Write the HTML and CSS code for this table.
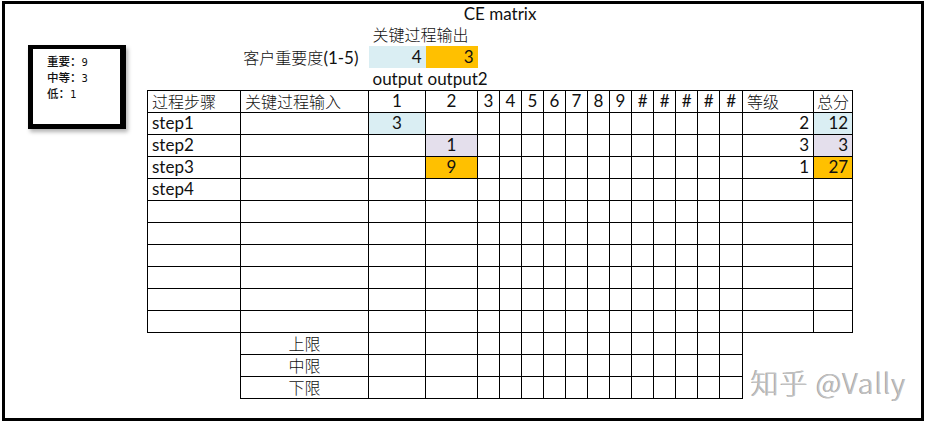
FILE: index.html
```html
<!DOCTYPE html>
<html lang="zh">
<head>
<meta charset="utf-8">
<title>CE matrix</title>
<link rel="stylesheet" href="styles.css">
</head>
<body>
<div class="frame">
  <div class="legend">
    <div class="lg-row"><span class="lg-zh">重要：</span><span class="lg-num">9</span></div>
    <div class="lg-row"><span class="lg-zh">中等：</span><span class="lg-num">3</span></div>
    <div class="lg-row"><span class="lg-zh">低：</span><span class="lg-num">1</span></div>
  </div>
  <table class="sheet">
    <colgroup>
      <col class="w93"><col class="w128"><col class="w57"><col class="w52">
      <col class="w22"><col class="w22"><col class="w22"><col class="w22"><col class="w22"><col class="w22">
      <col class="w22"><col class="w22"><col class="w22"><col class="w22"><col class="w22"><col class="w23">
      <col class="w71"><col class="w39">
    </colgroup>
    <tr class="first">
      <td colspan="2"></td><td colspan="9" class="c">CE matrix</td><td colspan="7"></td>
    </tr>
    <tr class="up">
      <td colspan="2"></td><td colspan="16" class="l"><span class="zh">关键过程输出</span></td>
    </tr>
    <tr>
      <td colspan="2" class="r rp"><span class="zh">客户重要度</span>(1-5)</td>
      <td class="r blue">4</td><td class="r orange">3</td><td colspan="14"></td>
    </tr>
    <tr>
      <td colspan="2"></td><td class="l">output</td><td class="l l2">output2</td><td colspan="14"></td>
    </tr>
    <tr class="hd">
      <td class="b l"><span class="zh">过程步骤</span></td><td class="b l"><span class="zh">关键过程输入</span></td>
      <td class="b c">1</td><td class="b c">2</td><td class="b c">3</td><td class="b c">4</td><td class="b c">5</td><td class="b c">6</td>
      <td class="b c">7</td><td class="b c">8</td><td class="b c">9</td><td class="b c">#</td><td class="b c">#</td><td class="b c">#</td>
      <td class="b c">#</td><td class="b c">#</td><td class="b l"><span class="zh">等级</span></td><td class="b c"><span class="zh">总分</span></td>
    </tr>
    <tr>
      <td class="b l">step1</td><td class="b"></td><td class="b c blue">3</td><td class="b"></td>
      <td class="b"></td><td class="b"></td><td class="b"></td><td class="b"></td><td class="b"></td><td class="b"></td><td class="b"></td>
      <td class="b"></td><td class="b"></td><td class="b"></td><td class="b"></td><td class="b"></td>
      <td class="b r">2</td><td class="b r blue">12</td>
    </tr>
    <tr>
      <td class="b l">step2</td><td class="b"></td><td class="b"></td><td class="b c lav">1</td>
      <td class="b"></td><td class="b"></td><td class="b"></td><td class="b"></td><td class="b"></td><td class="b"></td><td class="b"></td>
      <td class="b"></td><td class="b"></td><td class="b"></td><td class="b"></td><td class="b"></td>
      <td class="b r">3</td><td class="b r lav">3</td>
    </tr>
    <tr>
      <td class="b l">step3</td><td class="b"></td><td class="b"></td><td class="b c orange">9</td>
      <td class="b"></td><td class="b"></td><td class="b"></td><td class="b"></td><td class="b"></td><td class="b"></td><td class="b"></td>
      <td class="b"></td><td class="b"></td><td class="b"></td><td class="b"></td><td class="b"></td>
      <td class="b r">1</td><td class="b r orange">27</td>
    </tr>
    <tr>
      <td class="b l">step4</td><td class="b"></td><td class="b"></td><td class="b"></td>
      <td class="b"></td><td class="b"></td><td class="b"></td><td class="b"></td><td class="b"></td><td class="b"></td><td class="b"></td>
      <td class="b"></td><td class="b"></td><td class="b"></td><td class="b"></td><td class="b"></td>
      <td class="b"></td><td class="b"></td>
    </tr>
    <tr>
      <td class="b"></td><td class="b"></td><td class="b"></td><td class="b"></td><td class="b"></td><td class="b"></td><td class="b"></td><td class="b"></td><td class="b"></td>
      <td class="b"></td><td class="b"></td><td class="b"></td><td class="b"></td><td class="b"></td><td class="b"></td><td class="b"></td><td class="b"></td><td class="b"></td>
    </tr>
    <tr>
      <td class="b"></td><td class="b"></td><td class="b"></td><td class="b"></td><td class="b"></td><td class="b"></td><td class="b"></td><td class="b"></td><td class="b"></td>
      <td class="b"></td><td class="b"></td><td class="b"></td><td class="b"></td><td class="b"></td><td class="b"></td><td class="b"></td><td class="b"></td><td class="b"></td>
    </tr>
    <tr>
      <td class="b"></td><td class="b"></td><td class="b"></td><td class="b"></td><td class="b"></td><td class="b"></td><td class="b"></td><td class="b"></td><td class="b"></td>
      <td class="b"></td><td class="b"></td><td class="b"></td><td class="b"></td><td class="b"></td><td class="b"></td><td class="b"></td><td class="b"></td><td class="b"></td>
    </tr>
    <tr>
      <td class="b"></td><td class="b"></td><td class="b"></td><td class="b"></td><td class="b"></td><td class="b"></td><td class="b"></td><td class="b"></td><td class="b"></td>
      <td class="b"></td><td class="b"></td><td class="b"></td><td class="b"></td><td class="b"></td><td class="b"></td><td class="b"></td><td class="b"></td><td class="b"></td>
    </tr>
    <tr>
      <td class="b"></td><td class="b"></td><td class="b"></td><td class="b"></td><td class="b"></td><td class="b"></td><td class="b"></td><td class="b"></td><td class="b"></td>
      <td class="b"></td><td class="b"></td><td class="b"></td><td class="b"></td><td class="b"></td><td class="b"></td><td class="b"></td><td class="b"></td><td class="b"></td>
    </tr>
    <tr>
      <td class="b"></td><td class="b"></td><td class="b"></td><td class="b"></td><td class="b"></td><td class="b"></td><td class="b"></td><td class="b"></td><td class="b"></td>
      <td class="b"></td><td class="b"></td><td class="b"></td><td class="b"></td><td class="b"></td><td class="b"></td><td class="b"></td><td class="b"></td><td class="b"></td>
    </tr>
    <tr>
      <td></td><td class="b c"><span class="zh">上限</span></td>
      <td class="b"></td><td class="b"></td><td class="b"></td><td class="b"></td><td class="b"></td><td class="b"></td><td class="b"></td><td class="b"></td>
      <td class="b"></td><td class="b"></td><td class="b"></td><td class="b"></td><td class="b"></td><td class="b"></td>
      <td></td><td></td>
    </tr>
    <tr>
      <td></td><td class="b c"><span class="zh">中限</span></td>
      <td class="b"></td><td class="b"></td><td class="b"></td><td class="b"></td><td class="b"></td><td class="b"></td><td class="b"></td><td class="b"></td>
      <td class="b"></td><td class="b"></td><td class="b"></td><td class="b"></td><td class="b"></td><td class="b"></td>
      <td></td><td></td>
    </tr>
    <tr>
      <td></td><td class="b c"><span class="zh">下限</span></td>
      <td class="b"></td><td class="b"></td><td class="b"></td><td class="b"></td><td class="b"></td><td class="b"></td><td class="b"></td><td class="b"></td>
      <td class="b"></td><td class="b"></td><td class="b"></td><td class="b"></td><td class="b"></td><td class="b"></td>
      <td></td><td></td>
    </tr>
  </table>
  <div class="mark">知乎 @Vally</div>
</div>
</body>
</html>
```
FILE: styles.css
```css
* { box-sizing: border-box; }

body {
  margin: 0;
  background: #fff;
  font-family: Lato, "Noto Sans CJK SC", sans-serif;
  font-size: 17px;
  color: #111;
}

.frame {
  position: relative;
  margin: 1px 0 0 2px;
  width: 922px;
  height: 420px;
  border: 3px solid #000;
}

.sheet {
  border-collapse: collapse;
  table-layout: fixed;
  width: 705px;
  margin-left: 142px;
}

.w93 { width: 93px; }
.w128 { width: 128px; }
.w57 { width: 57px; }
.w52 { width: 52px; }
.w22 { width: 22px; }
.w23 { width: 23px; }
.w71 { width: 71px; }
.w39 { width: 39px; }

.sheet td {
  height: 22px;
  padding: 0 3px;
  white-space: nowrap;
  overflow: visible;
  line-height: 20px;
  vertical-align: middle;
}

.sheet tr.first td { height: 20px; }
.sheet tr.up td { vertical-align: top; }

.sheet td.b { border: 1px solid #000; }

.c { text-align: center; }
.l { text-align: left; }
.r { text-align: right; }
.sheet td.l { padding-left: 4px; }
.sheet td.l2 { padding-left: 2px; }
.sheet td.r { padding-right: 4px; }
.sheet td.rp { padding-right: 10px; }

.blue { background: #daeef3; }
.orange { background: #ffc000; }
.lav { background: #e4dfec; }

.zh {
  font-family: "Noto Sans CJK SC", sans-serif;
  font-size: 16px;
  font-weight: 300;
  color: #111;
}

.legend {
  position: absolute;
  left: 23px;
  top: 41px;
  width: 98px;
  height: 84px;
  border-style: solid;
  border-color: #000;
  border-width: 4px 6px 5px 5px;
  background: #fff;
  box-shadow: 2px 3px 4px rgba(0, 0, 0, 0.3);
  padding: 5px 0 0 14px;
  font-size: 11.5px;
  line-height: 15px;
}

.lg-zh {
  font-family: "Noto Sans CJK SC", sans-serif;
  font-weight: 500;
}

.lg-num {
  font-family: "DejaVu Sans Mono", monospace;
  font-size: 10.5px;
}

.mark {
  position: absolute;
  left: 746px;
  top: 358px;
  font-family: "Noto Sans CJK SC", sans-serif;
  font-weight: 300;
  font-size: 28px;
  letter-spacing: 1px;
  color: #c2c2c2;
  text-shadow: -1px 0 0 #a6a6a6, 1px 1px 0 #fff;
}
```
